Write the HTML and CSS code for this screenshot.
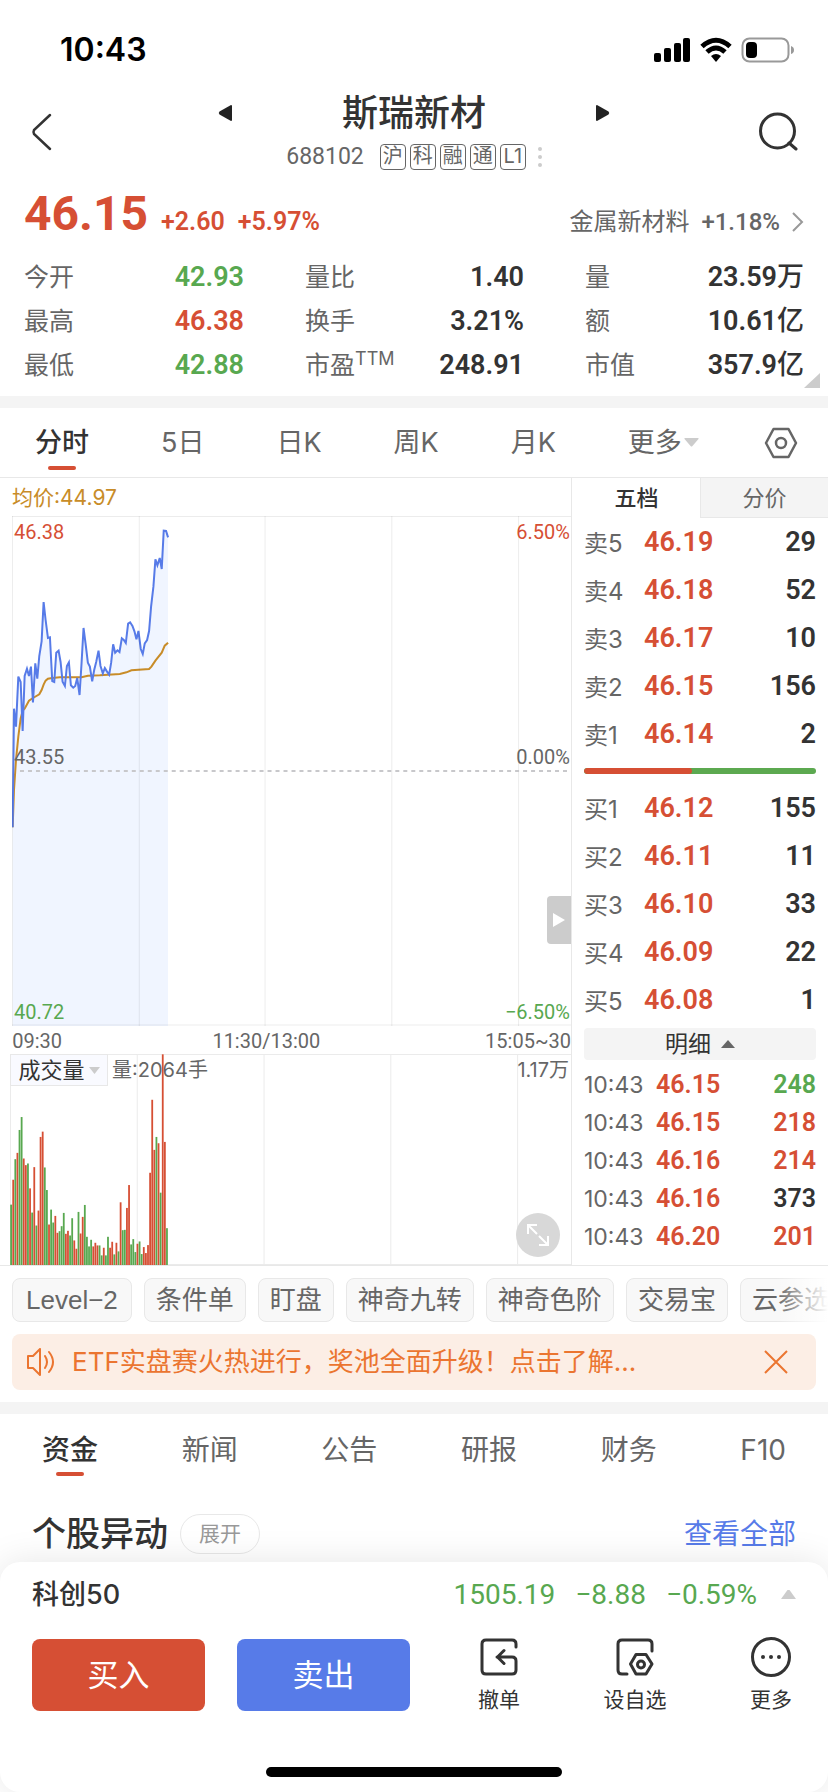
FILE: index.html
```html
<!DOCTYPE html>
<html lang="zh-CN">
<head>
<meta charset="utf-8">
<meta name="viewport" content="width=device-width, initial-scale=1">
<title>斯瑞新材 688102</title>
<link rel="stylesheet" href="styles.css">
</head>
<body>
<div class="app">
  <div class="status">
    <span class="clock">10:43</span>
    <svg width="142" height="28" viewBox="0 0 142 28" aria-hidden="true">
      <rect x="1" y="17" width="7" height="9" rx="2"/><rect x="11" y="12" width="7" height="14" rx="2"/><rect x="21" y="7" width="7" height="19" rx="2"/><rect x="30" y="2" width="7" height="24" rx="2"/>
      <g fill="none" stroke="#000" stroke-width="5"><path d="M49 10.500Q63-2 77 10.500"/><path d="M54 16Q63 8 72 16"/></g><path d="M58 20Q63 16 68 20L63 26Z"/>
      <rect x="89.500" y="2.500" width="46" height="23" rx="7" fill="none" stroke="#999" stroke-width="2"/><rect x="93" y="6" width="11" height="16" rx="4"/><path d="M138 10Q141 11 141 14T138 18Z" fill="#999"/>
    </svg>
  </div>

  <header class="header">
    <button class="icon-btn" aria-label="返回"><svg width="22" height="40" viewBox="0 0 22 40"><path d="M20 3 4 18Q3 20 4 22L20 37" fill="none" stroke="#333" stroke-width="2.500" stroke-linecap="round"/></svg></button>
    <div class="heading">
      <div class="name-row">
        <button class="icon-btn" aria-label="上一只"><svg width="14" height="18" viewBox="0 0 14 18"><path d="M13 1 1.500 7.500Q0 9 1.500 10.500L13 17Q14 17 14 16V2Q14 1 13 1Z" fill="#222"/></svg></button>
        <h1>斯瑞新材</h1>
        <button class="icon-btn" aria-label="下一只"><svg width="14" height="18" viewBox="0 0 14 18"><path d="M1 1 12.500 7.500Q14 9 12.500 10.500L1 17Q0 17 0 16V2Q0 1 1 1Z" fill="#222"/></svg></button>
      </div>
      <div class="code-row"><span class="code">688102</span><span class="badge">沪</span><span class="badge">科</span><span class="badge">融</span><span class="badge">通</span><span class="badge">L1</span>
        <svg width="4" height="20" viewBox="0 0 4 20" fill="#ccc"><circle cx="2" cy="2" r="2"/><circle cx="2" cy="10" r="2"/><circle cx="2" cy="18" r="2"/></svg></div>
    </div>
    <button class="icon-btn" aria-label="搜索"><svg width="40" height="40" viewBox="0 0 40 40" fill="none" stroke="#333" stroke-width="3"><circle cx="19.500" cy="19" r="17"/><path d="m31 31 7 6" stroke-linecap="round"/></svg></button>
  </header>

  <section class="quote">
    <div class="price-row up">
      <strong class="price">46.15</strong><span class="change">+2.60</span><span class="change">+5.97%</span>
      <a class="industry" href="#industry"><span>金属新材料</span><b>+1.18%</b><svg width="12" height="22" viewBox="0 0 12 22"><path d="m1 2 9 9-9 9" fill="none" stroke="#999" stroke-width="2"/></svg></a>
    </div>
    <dl class="stats">
      <div><dt>今开</dt><dd class="down">42.93</dd></div><div><dt>量比</dt><dd>1.40</dd></div><div><dt>量</dt><dd>23.59<span>万</span></dd></div>
      <div><dt>最高</dt><dd class="up">46.38</dd></div><div><dt>换手</dt><dd>3.21%</dd></div><div><dt>额</dt><dd>10.61<span>亿</span></dd></div>
      <div><dt>最低</dt><dd class="down">42.88</dd></div><div><dt>市盈<sup>TTM</sup></dt><dd>248.91</dd></div><div><dt>市值</dt><dd>357.9<span>亿</span></dd></div>
    </dl>
    <svg class="corner" width="16" height="15" viewBox="0 0 16 15"><path d="M16 0V15H0Z" fill="#ccc"/></svg>
  </section>

  <nav class="periods">
    <button class="tab active">分时</button><button class="tab">5日</button><button class="tab">日K</button><button class="tab">周K</button><button class="tab">月K</button>
    <button class="tab more">更多<svg width="15" height="9" viewBox="0 0 15 9"><path d="M1 0H14Q15 0 14.500 1L8 8.500H7L.5 1Q0 0 1 0Z" fill="#ccc"/></svg></button>
    <button class="icon-btn" aria-label="设置"><svg width="34" height="32" viewBox="0 0 34 32" fill="none" stroke="#666" stroke-width="2.500" stroke-linejoin="round"><path d="M9.500 2H24.500L32 16 24.500 30H9.500L2 16Z"/><circle cx="17" cy="16" r="5"/></svg></button>
  </nav>

  <main class="market">
    <section class="charts">
      <p class="average">均价:44.97</p>
      <div class="price-chart">
        <svg viewBox="0 0 560 510" preserveAspectRatio="none" role="img" aria-label="分时走势">
          <g id="price-lines" transform="translate(-12 -46) scale(.33333)"></g>
          <path d="M0 .5H560M.5 0V510M127.500 0V510M253.500 0V510M380.500 0V510M507.500 0V510M0 509H560" fill="none" stroke="#000" stroke-opacity=".08"/>
          <path d="M8 255H560" stroke="#c8c8cb" stroke-width="2" stroke-dasharray="4 4"/>
        </svg>
        <span class="mark tl up">46.38</span><span class="mark tr up">6.50%</span>
        <span class="mark ml">43.55</span><span class="mark mr">0.00%</span>
        <span class="mark bl down">40.72</span><span class="mark br down">−6.50%</span>
        <button class="collapse" aria-label="收起盘口"><svg width="12" height="14" viewBox="0 0 12 14"><path d="M0 0 12 7 0 14Z" fill="#fff"/></svg></button>
      </div>
      <div class="times"><span>09:30</span><span>11:30/13:00</span><span>15:05~30</span></div>
      <div class="volume-chart">
        <svg viewBox="0 0 562 212" preserveAspectRatio="none" role="img" aria-label="成交量">
          <path d="M0 .5H562M.5 0V212M127.500 0V212M254.500 0V212M381.500 0V212M508.500 0V212M0 211.500H562" fill="none" stroke="#ebebeb"/>
          <g id="volume-bars"></g>
        </svg>
        <div class="volume-head"><button class="indicator">成交量<svg width="11" height="7" viewBox="0 0 11 7"><path d="M0 0H11L5.500 7Z" fill="#ccc"/></svg></button><span>量:2064手</span><span class="peak">1.17万</span></div>
        <button class="expand" aria-label="全屏"><svg width="24" height="24" viewBox="0 0 24 24" fill="none" stroke="#fff" stroke-width="2"><path d="M2 11V2H11M2 2 11 11M13 13 22 22M22 13V22H13"/></svg></button>
      </div>
    </section>

    <aside class="book">
      <div class="book-tabs"><button class="active">五档</button><button>分价</button></div>
      <table class="depth"><tbody>
        <tr><th>卖5</th><td class="up">46.19</td><td>29</td></tr>
        <tr><th>卖4</th><td class="up">46.18</td><td>52</td></tr>
        <tr><th>卖3</th><td class="up">46.17</td><td>10</td></tr>
        <tr><th>卖2</th><td class="up">46.15</td><td>156</td></tr>
        <tr><th>卖1</th><td class="up">46.14</td><td>2</td></tr>
      </tbody></table>
      <div class="ratio"><i style="width:46.5%"></i></div>
      <table class="depth"><tbody>
        <tr><th>买1</th><td class="up">46.12</td><td>155</td></tr>
        <tr><th>买2</th><td class="up">46.11</td><td>11</td></tr>
        <tr><th>买3</th><td class="up">46.10</td><td>33</td></tr>
        <tr><th>买4</th><td class="up">46.09</td><td>22</td></tr>
        <tr><th>买5</th><td class="up">46.08</td><td>1</td></tr>
      </tbody></table>
      <button class="detail">明细<svg width="14" height="8" viewBox="0 0 14 8"><path d="M0 8 7 0 14 8Z" fill="#666"/></svg></button>
      <table class="trades"><tbody>
        <tr><th>10:43</th><td class="up">46.15</td><td class="down">248</td></tr>
        <tr><th>10:43</th><td class="up">46.15</td><td class="up">218</td></tr>
        <tr><th>10:43</th><td class="up">46.16</td><td class="up">214</td></tr>
        <tr><th>10:43</th><td class="up">46.16</td><td>373</td></tr>
        <tr><th>10:43</th><td class="up">46.20</td><td class="up">201</td></tr>
      </tbody></table>
    </aside>
  </main>

  <div class="chips"><button>Level−2</button><button>条件单</button><button>盯盘</button><button>神奇九转</button><button>神奇色阶</button><button>交易宝</button><button>云参选</button></div>

  <div class="notice">
    <svg width="30" height="28" viewBox="0 0 30 28" fill="none" stroke="#eb7530" stroke-width="2" stroke-linecap="round" stroke-linejoin="round"><path d="M14 1V27L7 20H2V8H7Z"/><path d="M19 8Q23 14 19 20M23 4Q31 14 23 24"/></svg>
    <a href="#etf">ETF实盘赛火热进行，奖池全面升级！点击了解...</a>
    <button class="icon-btn" aria-label="关闭"><svg width="26" height="26" viewBox="0 0 26 26"><path d="M2 2 24 24M24 2 2 24" stroke="#eb7530" stroke-width="2"/></svg></button>
  </div>

  <nav class="sections"><button class="tab active">资金</button><button class="tab">新闻</button><button class="tab">公告</button><button class="tab">研报</button><button class="tab">财务</button><button class="tab">F10</button></nav>

  <section class="events"><h2>个股异动</h2><button>展开</button><a href="#all">查看全部</a></section>

  <footer class="sheet">
    <div class="index-row"><span>科创50</span><span class="index-values down"><b>1505.19</b><b>−8.88</b><b>−0.59%</b></span><svg width="15" height="9" viewBox="0 0 15 9"><path d="M0 9 6.500 0H8.500L15 9Z" fill="#ccc"/></svg></div>
    <div class="actions">
      <button class="trade buy">买入</button><button class="trade sell">卖出</button>
      <div class="tools">
        <button class="tool"><svg width="42" height="42" viewBox="0 0 42 42" fill="none" stroke="#333" stroke-width="3" stroke-linecap="round" stroke-linejoin="round"><path d="M38 11V8Q38 4 34 4H8Q4 4 4 8V34Q4 38 8 38H34Q38 38 38 34V25Q38 21 34 21H19M26 14.500 19.500 21 26 27.500"/></svg>撤单</button>
        <button class="tool"><svg width="42" height="42" viewBox="0 0 42 42" fill="none" stroke="#333" stroke-width="3" stroke-linecap="round" stroke-linejoin="round"><path d="M38 15V8Q38 4 34 4H8Q4 4 4 8V34Q4 38 8 38H13M22 18.500H32L38 28 32 38H22L16.500 28Z"/><circle cx="27" cy="28.500" r="3.500"/></svg>设自选</button>
        <button class="tool"><svg width="42" height="42" viewBox="0 0 42 42" fill="#333"><circle cx="21" cy="21" r="18.500" fill="none" stroke="#333" stroke-width="3"/><circle cx="13" cy="21" r="2"/><circle cx="21" cy="21" r="2"/><circle cx="29" cy="21" r="2"/></svg>更多</button>
      </div>
    </div>
    <div class="home"></div>
  </footer>
</div>
<script src="chart.js"></script>
</body>
</html>
```
FILE: styles.css
```css
* { box-sizing: border-box; }
body { margin: 0; background: #fff; color: #333; font-family: Inter, "Noto Sans CJK SC", sans-serif; font-size: 24px; line-height: 32px; }
button { margin: 0; padding: 0; border: 0; background: none; color: inherit; font: inherit; }
a { color: inherit; text-decoration: none; }
h1, h2, p, dl, dd { margin: 0; }
svg { display: block; flex: none; }
.up { color: #d64f34; }
.down { color: #58a850; }
.app { display: flex; flex-direction: column; min-height: 100vh; overflow: hidden; }
.icon-btn { display: flex; align-items: center; justify-content: center; }

.status { display: flex; justify-content: space-between; align-items: center; height: 88px; padding: 12px 33px 0 60px; }
.clock { color: #000; font-size: 32px; font-weight: 600; }

.header { display: flex; justify-content: space-between; align-items: center; height: 88px; padding: 0 30px; }
.header > .icon-btn { width: 40px; justify-content: flex-start; }
.heading { width: 392px; }
.name-row { display: flex; justify-content: space-between; align-items: center; height: 50px; }
h1 { font-size: 36px; line-height: 48px; font-weight: 500; }
.code-row { display: flex; justify-content: center; align-items: center; gap: 4px; height: 38px; color: #666; }
.code { margin-right: 12px; font-family: Roboto, sans-serif; font-size: 23px; }
.code-row svg { margin-left: 8px; }
.badge { width: 26px; height: 26px; border: 1px solid #666; border-radius: 4px; font-size: 20px; line-height: 23px; text-align: center; }

.quote { position: relative; padding: 8px 24px 8px; border-bottom: 12px solid #f4f4f4; height: 232px; }
.price-row { display: flex; align-items: flex-end; gap: 13px; height: 71px; padding-bottom: 17px; font-family: Roboto, "Noto Sans CJK SC", sans-serif; }
.price { font-size: 48px; line-height: 48px; }
.change { font-size: 25px; font-weight: 600; }
.industry { display: flex; align-items: center; gap: 12px; margin-left: auto; color: #666; font-size: 24px; }
.industry b { font-size: 24px; font-weight: 500; }
.stats { display: grid; grid-template-columns: 220px 219px 219px; justify-content: space-between; }
.stats div { display: flex; align-items: center; justify-content: space-between; height: 44px; }
.stats dt { color: #666; font-size: 25px; }
.stats dd { font-family: Roboto, "Noto Sans CJK SC", sans-serif; font-size: 27px; font-weight: 600; white-space: nowrap; }
.stats dd span { font-weight: 500; }
.stats sup { font-size: 18px; line-height: 0; }
.corner { position: absolute; right: 8px; bottom: 8px; }

.periods { display: flex; gap: 72px; align-items: center; height: 70px; padding: 0 30px 0 35px; border-bottom: 1px solid #e8e8e8; }
.periods .icon-btn { margin-left: auto; }
.tab { position: relative; color: #666; font-size: 27px; line-height: 40px; white-space: nowrap; }
.tab.active { color: #333; font-weight: 500; }
.tab.active::after { content: ""; position: absolute; left: 50%; bottom: -7px; width: 28px; height: 4px; margin-left: -14px; border-radius: 2px; background: #d64f34; }
.more { display: flex; align-items: center; gap: 2px; margin-right: -72px; }

.market { display: grid; grid-template-columns: minmax(0, 1fr) 256px; border-bottom: 1px solid #e8e8e8; }
.charts { border-right: 1px solid #e8e8e8; }
.average { height: 38px; padding: 4px 12px 0; color: #c88c28; font-size: 21px; }
.price-chart { position: relative; height: 510px; margin-left: 12px; }
.price-chart > svg, .volume-chart > svg { width: 100%; height: 100%; }
.mark { position: absolute; font-family: Roboto, sans-serif; font-size: 20px; line-height: 24px; color: #666; }
.mark.up { color: #d64f34; }
.mark.down { color: #58a850; }
.tl { left: 2px; top: 4px; } .tr { right: 1px; top: 4px; }
.ml { left: 2px; top: 229px; } .mr { right: 1px; top: 229px; }
.bl { left: 2px; bottom: 2px; } .br { right: 1px; bottom: 2px; }
.collapse { position: absolute; right: 0; top: 380px; display: flex; align-items: center; justify-content: center; width: 24px; height: 48px; border-radius: 4px 0 0 4px; background: #ccc; }
.times { display: grid; grid-template-columns: 9% 73% 1fr; height: 28px; padding-left: 12px; color: #666; font-family: Roboto, sans-serif; font-size: 20px; line-height: 30px; text-align: center; white-space: nowrap; }
.times span:last-child { justify-self: end; }
.volume-chart { position: relative; height: 211px; margin-left: 10px; }
.volume-head { position: absolute; left: 0; right: 2px; top: 0; display: flex; gap: 4px; color: #666; font-size: 20px; line-height: 32px; }
.indicator { display: flex; align-items: center; justify-content: center; gap: 4px; width: 98px; height: 32px; border: 1px solid #e8e8e8; background: #f9faff; color: #333; font-size: 22px; }
.peak { margin-left: auto; }
.expand { position: absolute; right: 11px; bottom: 8px; display: flex; align-items: center; justify-content: center; width: 44px; height: 44px; border-radius: 50%; background: #d8d8d8; }

.book-tabs { display: flex; }
.book-tabs button { flex: 1; height: 40px; border-left: 1px solid #e8e8e8; border-bottom: 1px solid #e8e8e8; background: #f4f4f4; color: #666; font-size: 22px; line-height: 38px; }
.book-tabs .active { border-color: #fff; background: #fff; color: #333; font-weight: 500; }
.depth, .trades { width: 232px; margin: 0 12px; border-collapse: collapse; table-layout: fixed; }
.depth td, .depth th, .trades td, .trades th { padding: 0; font-family: Roboto, sans-serif; font-size: 27px; font-weight: 600; text-align: left; }
.depth td, .depth th { height: 48px; line-height: 48px; }
.depth th { width: 60px; padding-top: 4px; color: #666; font-family: Inter, "Noto Sans CJK SC", sans-serif; font-size: 24px; line-height: 44px; font-weight: 400; }
.depth td:last-child, .trades td:last-child { text-align: right; }
.ratio { height: 6px; margin: 10px 12px; border-radius: 3px; background: #5ca950; overflow: hidden; }
.ratio i { display: block; height: 100%; border-radius: 3px; background: #d64f34; }
.detail { display: flex; justify-content: center; align-items: center; gap: 10px; width: 232px; height: 32px; margin: 4px 12px 6px; border-radius: 4px; background: #f4f4f4; font-size: 23px; }
.trades td, .trades th { height: 38px; line-height: 38px; font-size: 25px; }
.trades th { width: 72px; color: #666; font-family: Inter, sans-serif; font-size: 23px; font-weight: 400; }

.chips { position: relative; display: flex; gap: 12px; height: 68px; padding: 12px 0 12px 12px; overflow: hidden; }
.chips::after { content: ""; position: absolute; top: 0; right: 0; bottom: 0; width: 52px; background: linear-gradient(90deg, #fff0, #fff); }
.chips button { flex: none; height: 44px; padding: 0 11px; border: 1px solid #e8e8e8; border-radius: 8px; background: #f8f8f8; color: #666; font-family: "Liberation Sans", "Noto Sans CJK SC", sans-serif; font-size: 26px; line-height: 40px; }
.chips button:first-child { padding: 0 13px; }
.notice { display: flex; align-items: center; height: 56px; margin: 0 12px; padding: 0 27px 0 14px; border-radius: 8px; background: #fceee5; color: #eb7530; font-size: 26px; }
.notice a { flex: 1; margin-left: 16px; white-space: nowrap; }

.sections { display: flex; justify-content: space-between; align-items: center; height: 84px; margin-top: 12px; padding: 0 42px; border-top: 12px solid #f4f4f4; }
.sections .tab { font-size: 28px; }
.sections .tab.active::after { bottom: -6px; }
.events { display: flex; align-items: center; gap: 12px; height: 76px; padding: 20px 32px 0; }
h2 { font-size: 34px; line-height: 48px; font-weight: 500; }
.events button { width: 80px; height: 40px; border: 1px solid #e8e8e8; border-radius: 20px; color: #999; font-size: 21px; }
.events a { margin-left: auto; color: #577be8; font-size: 28px; }

.sheet { flex: 1; position: relative; padding: 0 32px; border-radius: 20px; background: #fff; box-shadow: 0 0 36px rgb(0 0 0 / 10%); }
.index-row { display: flex; align-items: center; height: 65px; font-size: 27px; font-weight: 500; }
.index-values { display: flex; gap: 20px; margin-left: auto; margin-right: 24px; font-family: Roboto, sans-serif; font-size: 28px; }
.index-values b { font-weight: 400; }
.actions { display: flex; align-items: center; margin-top: 7px; }
.trade { width: 173px; height: 72px; margin-right: 32px; border-radius: 8px; color: #fff; font-size: 31px; }
.buy { background: #d64f34; }
.sell { background: #577be8; }
.tools { flex: 1; display: flex; justify-content: space-between; padding: 2px 4px 0 36px; }
.tool { display: flex; flex-direction: column; align-items: center; gap: 7px; font-size: 21px; line-height: 30px; white-space: nowrap; }
.home { width: 296px; height: 10px; margin: 52px auto 0; border-radius: 5px; background: #000; }
```
FILE: chart.js
```js
const NS = "http://www.w3.org/2000/svg";
const prices = "38,1072 42,716 48,770 55,620 62,636 68,783 74,618 81,596 87,618 93,590 99,697 106,580 112,626 118,558 125,514 131,396 137,450 144,504 150,502 157,633 163,636 169,548 176,542 182,576 188,635 195,648 201,588 207,577 213,646 220,653 226,648 232,624 239,675 245,580 251,474 258,528 264,578 270,590 277,634 283,600 289,576 296,542 302,588 309,610 315,594 321,604 328,614 334,578 340,523 346,548 353,541 359,546 366,505 372,510 378,519 385,461 391,457 398,468 404,484 410,508 416,483 423,537 429,552 435,520 442,510 448,483 454,410 461,350 467,268 473,286 480,264 486,297 492,182 499,183 505,202";
const averages = "38,1072 42,960 48,870 55,800 62,745 68,722 74,716 87,692 99,684 118,673 125,660 131,644 137,632 144,626 157,624 180,622 245,622 264,617 300,616 360,612 380,607 395,601 448,597 455,590 467,572 486,548 495,527 505,518";

function add(parent, name, attrs) {
  const el = document.createElementNS(NS, name);
  for (const key in attrs) el.setAttribute(key, attrs[key]);
  parent.appendChild(el);
}

const lines = document.getElementById("price-lines");
add(lines, "polygon", { points: "38,1668 " + prices + " 505,1668", fill: "#f0f5ff" });
add(lines, "polyline", { points: averages, fill: "none", stroke: "#c88c28", "stroke-width": 6 });
add(lines, "polyline", { points: prices, fill: "none", stroke: "#577be8", "stroke-width": 6 });

// Bar heights in thirds of a pixel, with r for a rising minute and g for a falling one.
const volumes = "g182 r257 g319 r338 g407 g446 r321 r301 g306 r231 g158 r295 g119 r164 r386 r402 g294 g226 r122 g167 g128 r148 r97 g102 g117 g157 r94 r103 g89 g141 r74 r49 g160 r95 r145 g181 g85 g56 g76 r56 r67 r59 g59 g29 r52 g29 g85 r52 r70 g32 r67 g41 r189 g105 g106 r172 r241 g62 g78 g39 r64 g71 g33 r54 r36 r60 r278 r498 r347 g386 r367 g218 r635 r371 g111".split(" ");
const bars = document.getElementById("volume-bars");
volumes.forEach((item, i) => {
  const height = item.slice(1) / 3;
  add(bars, "rect", { x: i * 2.11 + 0.2, y: 212 - height, width: 1.8, height, fill: item[0] === "r" ? "#d64f34" : "#58a850" });
});
```
